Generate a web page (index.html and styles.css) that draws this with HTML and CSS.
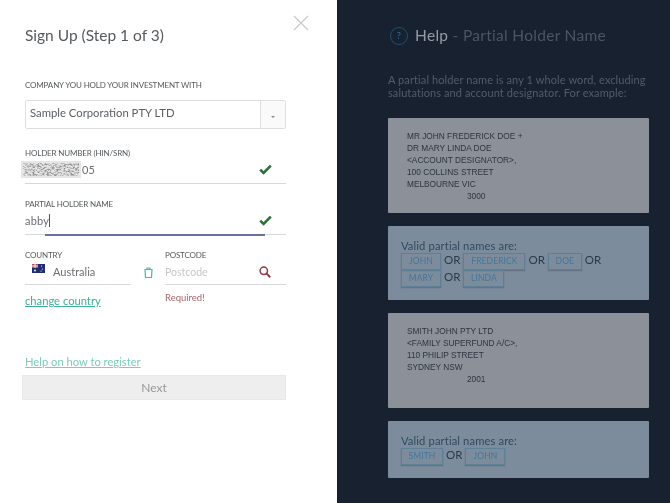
FILE: index.html
```html
<!DOCTYPE html>
<html lang="en">
<head>
<meta charset="utf-8">
<title>Sign Up</title>
<link rel="stylesheet" href="styles.css">
</head>
<body>
<div class="page">
  <main class="form-panel">
    <button class="close" aria-label="Close">
      <svg width="16" height="16" viewBox="0 0 16 16"><path d="M1 1l14 14M15 1L1 15" stroke="#c4c8cb" stroke-width="1.1" fill="none"/></svg>
    </button>
    <h1 class="title">Sign Up (Step 1 of 3)</h1>

    <label class="label label-company">COMPANY YOU HOLD YOUR INVESTMENT WITH</label>
    <div class="select">
      <span class="select-value">Sample Corporation PTY LTD</span>
      <span class="select-arrow"><i></i></span>
    </div>

    <div class="field field-holder">
      <label class="label">HOLDER NUMBER (HIN/SRN)</label>
      <div class="input-row">
        <svg class="masked" width="60" height="17" viewBox="0 0 60 17">
          <filter id="noise" x="0" y="0" width="100%" height="100%">
            <feTurbulence type="fractalNoise" baseFrequency="0.42 0.6" numOctaves="2" seed="7"/>
            <feColorMatrix type="matrix" values="0 0 0 0 0.28  0 0 0 0 0.28  0 0 0 0 0.28  3.2 0 0 0 -1.3"/>
          </filter>
          <rect width="60" height="17" fill="#e6e6e6"/>
          <rect x="2" y="2" width="56" height="13" filter="url(#noise)"/>
        </svg><span class="value">05</span>
        <svg class="tick" width="13" height="11" viewBox="0 0 13 11"><path d="M1.2 5.6l3.4 3.4L11.8 1.6" stroke="#2f6f3c" stroke-width="2.6" fill="none"/></svg>
      </div>
    </div>

    <div class="field field-partial">
      <label class="label">PARTIAL HOLDER NAME</label>
      <div class="input-row">
        <span class="value">abby</span><span class="caret"></span>
        <svg class="tick" width="13" height="11" viewBox="0 0 13 11"><path d="M1.2 5.6l3.4 3.4L11.8 1.6" stroke="#2f6f3c" stroke-width="2.6" fill="none"/></svg>
      </div>
      <span class="focus-line"></span>
    </div>

    <div class="geo">
      <div class="geo-col geo-country">
        <label class="label">COUNTRY</label>
        <div class="input-row country-row">
          <svg class="flag" width="13" height="9" viewBox="0 0 13 9"><rect width="13" height="9" fill="#1f2f6e"/><rect width="6" height="4" fill="#b4506e"/><path d="M0 2h6M3 0v4" stroke="#eed" stroke-width="1"/><circle cx="3" cy="6.5" r=".9" fill="#fff"/><circle cx="9.5" cy="2" r=".6" fill="#fff"/><circle cx="10.5" cy="5" r=".6" fill="#fff"/><circle cx="9" cy="7" r=".6" fill="#fff"/></svg>
          <span class="value country-name">Australia</span>
        </div>
        <a class="change" href="#">change country</a>
      </div>
      <svg class="trash" width="9" height="11" viewBox="0 0 9 11"><path d="M1 2.5h7l-.5 8H1.5zM3 2.500V1h3v1.500" stroke="#4fb7a4" stroke-width="1.2" fill="none"/></svg>
      <div class="geo-col geo-post">
        <label class="label">POSTCODE</label>
        <div class="input-row">
          <span class="value placeholder">Postcode</span>
          <svg class="search" width="12" height="12" viewBox="0 0 12 12"><circle cx="4.8" cy="4.8" r="3.7" stroke="#8a3a42" stroke-width="1.5" fill="none"/><path d="M7.600 7.600l3.600 3.600" stroke="#8a3a42" stroke-width="2" fill="none"/></svg>
        </div>
        <p class="error">Required!</p>
      </div>
    </div>

    <a class="help-link" href="#">Help on how to register</a>
    <button class="next">Next</button>
  </main>

  <aside class="help-panel">
    <h2 class="help-title">
      <span class="help-icon">?</span>
      <span class="help-text"><b>Help</b> - Partial Holder Name</span>
    </h2>
    <p class="help-intro">A partial holder name is any 1 whole word, excluding salutations and account designator. For example:</p>

    <div class="card address addr-first">MR JOHN FREDERICK DOE +<br>DR MARY LINDA DOE<br>&lt;ACCOUNT DESIGNATOR&gt;,<br>100 COLLINS STREET<br>MELBOURNE VIC<br><span class="pc">3000</span></div>
    <div class="card valid">
      <div class="valid-title">Valid partial names are:</div>
      <div class="tags">
        <span class="tag t-john">JOHN</span><span class="or">OR</span><span class="tag t-fred">FREDERICK</span><span class="or">OR</span><span class="tag t-doe">DOE</span><span class="or">OR</span>
        <span class="tag t-mary">MARY</span><span class="or">OR</span><span class="tag t-linda">LINDA</span>
      </div>
    </div>
    <div class="card address">SMITH JOHN PTY LTD<br>&lt;FAMILY SUPERFUND A/C&gt;,<br>110 PHILIP STREET<br>SYDNEY NSW<br><span class="pc">2001</span></div>
    <div class="card valid valid-last">
      <div class="valid-title">Valid partial names are:</div>
      <div class="tags">
        <span class="tag t-smith">SMITH</span><span class="or">OR</span><span class="tag t-john2">JOHN</span>
      </div>
    </div>
  </aside>
</div>
</body>
</html>
```
FILE: styles.css
```css
* { box-sizing: border-box; }
html, body { margin: 0; padding: 0; }
body { background: #fff; font-family: "Lato", "Open Sans", sans-serif; }
.page {
  display: flex;
  width: 670px;
  height: 503px;
  overflow: hidden;
  filter: blur(0.35px);
}

/* left panel */
.form-panel {
  position: relative;
  width: 337px;
  flex: none;
  padding: 25px 51px 0 25px;
  background: #fff;
}
.close {
  position: absolute;
  top: 15px;
  left: 293px;
  width: 16px;
  height: 16px;
  padding: 0;
  border: 0;
  background: none;
}
.close svg { display: block; }
.title {
  margin: 0;
  font-size: 15.5px;
  line-height: 20px;
  font-weight: 400;
  color: #555a5e;
}
.label {
  display: block;
  font-size: 8px;
  line-height: 11px;
  color: #55595c;
  letter-spacing: -0.15px;
}
.label-company { margin-top: 35px; }
.select {
  display: flex;
  align-items: stretch;
  height: 29px;
  margin-top: 9px;
  border: 1px solid #dddfe0;
  border-radius: 2px;
}
.select-value {
  flex: 1;
  padding-left: 4px;
  font-size: 11.3px;
  line-height: 24px;
  color: #5c6064;
}
.select-arrow {
  display: flex;
  align-items: center;
  justify-content: center;
  width: 25px;
  border-left: 1px solid #dddfe0;
  background: #fafafa;
}
.select-arrow i {
  border: 2px solid transparent;
  border-top: 2px solid #888;
  border-bottom: 0;
  margin-top: 4px;
}
.field { position: relative; }
.field-holder { margin-top: 19px; }
.field-partial { margin-top: 15px; }
.input-row {
  display: flex;
  align-items: center;
  height: 24px;
  padding-bottom: 2px;
  border-bottom: 1px solid #d6d8d9;
  font-size: 11px;
}
.field .input-row { height: 25px; padding-bottom: 3px; }
.value { color: #6a6e72; letter-spacing: 0.2px; }
.masked {
  display: block;
  flex: none;
  margin-left: -4px;
  margin-right: 1px;
}
.tick { margin-left: auto; margin-right: 14px; }
.caret {
  width: 1px;
  height: 13px;
  background: #555;
}
.focus-line {
  position: absolute;
  left: 20px;
  bottom: -1px;
  width: 220px;
  height: 2px;
  background: #6a739f;
}
.geo {
  display: flex;
  align-items: flex-start;
  margin-top: 15px;
}
.geo-country { width: 106px; flex: none; }
.geo-post { flex: 1; margin-left: 12px; }
.country-row { padding-left: 7px; }
.country-name { letter-spacing: 0; }
.flag { margin: -6px 8px 0 0; flex: none; }
.trash { margin: 17px 0 0 13px; flex: none; }
.placeholder { color: #c5c7c9; font-size: 10.5px; letter-spacing: 0; }
.search { margin-left: auto; margin-right: 15px; flex: none; }
.change {
  display: block;
  margin-top: 9px;
  font-size: 11.2px;
  line-height: 14px;
  color: #3fae9b;
}
.error {
  margin: 7px 0 0;
  font-size: 9.5px;
  line-height: 12px;
  color: #a3666a;
}
.help-link {
  display: block;
  margin-top: 47px;
  font-size: 11.2px;
  line-height: 14px;
  color: #7ccbbc;
}
.next {
  display: block;
  width: 264px;
  height: 25px;
  margin: 6px 0 0 -3px;
  border: 1px solid #e8e8e8;
  background: #eeeeee;
  font: 12px "Lato", sans-serif;
  color: #96989a;
}

/* right panel */
.help-panel {
  flex: 1;
  padding: 26px 21px 0 51px;
  background: #17212f;
}
.help-title {
  display: flex;
  align-items: center;
  gap: 7px;
  margin: 0;
  height: 20px;
  font-size: 15.5px;
  font-weight: 400;
  color: #4a5565;
  letter-spacing: 0.3px;
}
.help-text { margin-top: -2px; }
.help-title b { font-weight: 400; color: #959ba5; }
.help-icon {
  flex: none;
  width: 18px;
  height: 18px;
  margin-left: 2px;
  border: 1.5px solid #1f4e74;
  border-radius: 50%;
  font-size: 10px;
  line-height: 15px;
  text-align: center;
  color: #2b6a96;
}
.help-intro {
  margin: 27px 0 0;
  font-size: 11px;
  line-height: 13px;
  color: #525c6b;
  letter-spacing: 0.1px;
}
.card { border-radius: 1px; }
.address {
  height: 95px;
  margin-top: 13px;
  padding: 12px 19px 0;
  background: #8b9099;
  font-family: "Liberation Sans", Arial, sans-serif;
  font-size: 8.3px;
  line-height: 12px;
  color: #2e3540;
}
.addr-first { margin-top: 19px; }
.pc { margin-left: 60px; }
.valid {
  height: 74px;
  margin-top: 13px;
  padding: 13px 13px 0;
  background: #7c8c9c;
}
.valid-last { height: 57px; }
.valid-title {
  font-size: 11.2px;
  line-height: 14px;
  color: #2f4a62;
  letter-spacing: 0.12px;
}
.tags {
  display: flex;
  flex-wrap: wrap;
  align-items: flex-start;
  font-size: 11.5px;
}
.tag {
  display: block;
  height: 17px;
  border: 1px solid #5f7f97;
  box-shadow: 0 1px 1px rgba(30,45,60,.25);
  font-size: 8.5px;
  line-height: 15px;
  text-align: center;
  color: #44779a;
  letter-spacing: 0.1px;
}
.or {
  height: 17px;
  margin: 0 3px;
  line-height: 14px;
  color: #2a3a4a;
}
.t-john { width: 40px; }
.t-fred { width: 62px; }
.t-doe { width: 34px; }
.t-mary { width: 40px; }
.t-linda { width: 41px; }
.t-smith { width: 42px; }
.t-john2 { width: 40px; }
```
